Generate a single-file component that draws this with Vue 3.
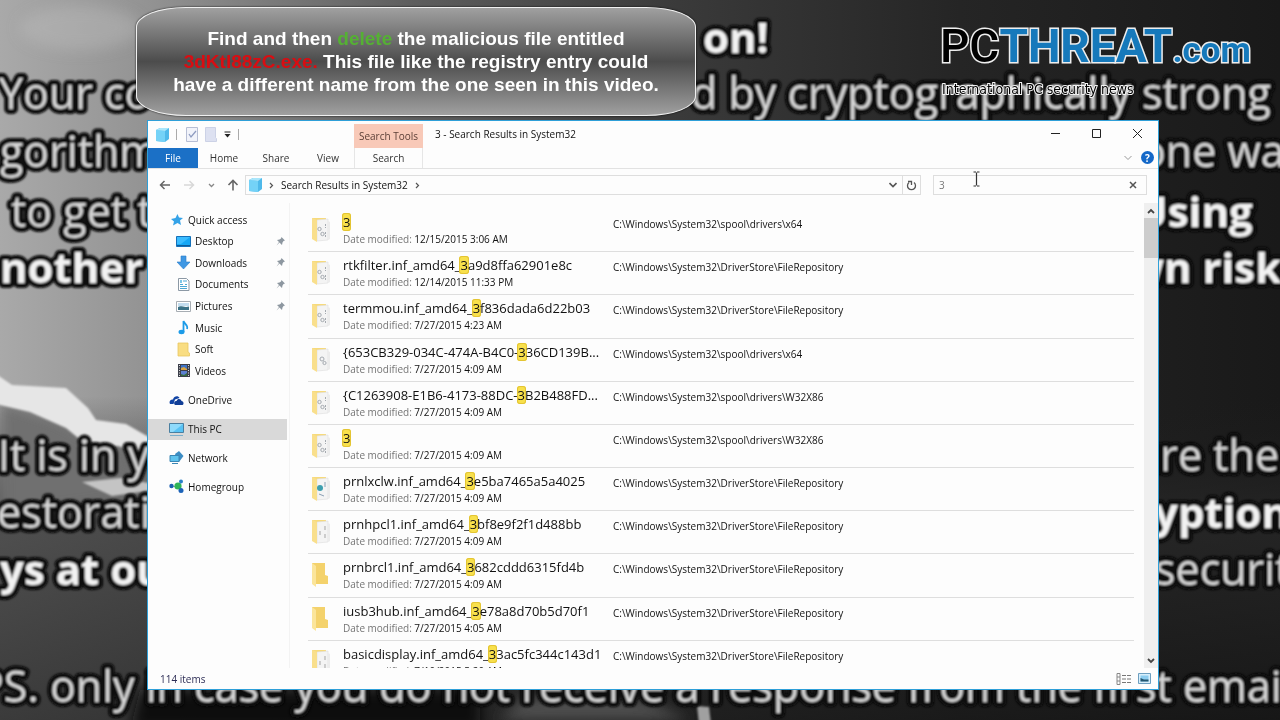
<script setup>
import { ref } from 'vue'

const query = ref('3')

const driver = 'C:\\Windows\\System32\\DriverStore\\FileRepository'
const spool64 = 'C:\\Windows\\System32\\spool\\drivers\\x64'
const spool86 = 'C:\\Windows\\System32\\spool\\drivers\\W32X86'

const results = [
  { pre: '', post: '', date: '12/15/2015 3:06 AM', path: spool64, kind: 'gears' },
  { pre: 'rtkfilter.inf_amd64_', post: 'a9d8ffa62901e8c', date: '12/14/2015 11:33 PM', path: driver, kind: 'gears' },
  { pre: 'termmou.inf_amd64_', post: 'f836dada6d22b03', date: '7/27/2015 4:23 AM', path: driver, kind: 'gears' },
  { pre: '{653CB329-034C-474A-B4C0-', post: '36CD139B...', date: '7/27/2015 4:09 AM', path: spool64, kind: 'gear' },
  { pre: '{C1263908-E1B6-4173-88DC-', post: 'B2B488FD...', date: '7/27/2015 4:09 AM', path: spool86, kind: 'gears' },
  { pre: '', post: '', date: '7/27/2015 4:09 AM', path: spool86, kind: 'gears' },
  { pre: 'prnlxclw.inf_amd64_', post: 'e5ba7465a5a4025', date: '7/27/2015 4:09 AM', path: driver, kind: 'globe' },
  { pre: 'prnhpcl1.inf_amd64_', post: 'bf8e9f2f1d488bb', date: '7/27/2015 4:09 AM', path: driver, kind: 'pages' },
  { pre: 'prnbrcl1.inf_amd64_', post: '682cddd6315fd4b', date: '7/27/2015 4:09 AM', path: driver, kind: 'plain' },
  { pre: 'iusb3hub.inf_amd64_', post: 'e78a8d70b5d70f1', date: '7/27/2015 4:05 AM', path: driver, kind: 'plain' },
  { pre: 'basicdisplay.inf_amd64_', post: '3ac5fc344c143d1', date: '7/10/2015 5:20 AM', path: driver, kind: 'pages' }
]

const quick = [
  { name: 'Quick access', icon: 'star', root: true },
  { name: 'Desktop', icon: 'desktop', pin: true },
  { name: 'Downloads', icon: 'down', pin: true },
  { name: 'Documents', icon: 'doc', pin: true },
  { name: 'Pictures', icon: 'pic', pin: true },
  { name: 'Music', icon: 'music' },
  { name: 'Soft', icon: 'folder' },
  { name: 'Videos', icon: 'video' }
]
const places = [
  { name: 'OneDrive', icon: 'cloud' },
  { name: 'This PC', icon: 'pc', selected: true },
  { name: 'Network', icon: 'network' },
  { name: 'Homegroup', icon: 'home' }
]

const note = [
  { x: 703, y: 53, b: true, t: 'on!' },
  { x: -1, y: 109, t: 'Your co' },
  { x: 691, y: 109, t: 'd by cryptographically strong' },
  { x: 0, y: 167, t: 'gorithm' },
  { x: 1140, y: 167, t: 'one wa' },
  { x: 11, y: 227, t: 'to get t' },
  { x: 1136, y: 227, b: true, t: 'Using' },
  { x: 0, y: 283, b: true, t: 'nother' },
  { x: 1128, y: 283, b: true, t: 'wn risk' },
  { x: -2, y: 471, t: 'It is in y' },
  { x: 1134, y: 471, t: 'ure the' },
  { x: -3, y: 528, t: 'estoratio' },
  { x: 1154, y: 528, b: true, t: 'yption' },
  { x: 0, y: 585, b: true, t: 'ys at ou' },
  { x: 1155, y: 585, t: 'securit' },
  { x: -22, y: 702, t: 'PS. only in case you do not receive a response from the first email' }
]
</script>

<template>
  <main class="desktop">
    <svg class="wallpaper" viewBox="0 0 1280 720" preserveAspectRatio="xMidYMid slice" aria-hidden="true">
      <defs>
        <linearGradient id="wall" x1="0" x2="1" y1="0" y2="0">
          <stop offset="0" stop-color="#a9a9a9" />
          <stop offset=".12" stop-color="#929292" />
          <stop offset=".32" stop-color="#5e5e5e" />
          <stop offset=".52" stop-color="#3b3b3b" />
          <stop offset=".75" stop-color="#252525" />
          <stop offset="1" stop-color="#191919" />
        </linearGradient>
        <linearGradient id="fall" x1="0" x2="0" y1="0" y2="1">
          <stop offset=".55" stop-color="#1c1c1c" stop-opacity="0" />
          <stop offset=".72" stop-color="#2a2a2a" stop-opacity=".7" />
          <stop offset="1" stop-color="#161616" stop-opacity=".75" />
        </linearGradient>
        <filter id="haze" x="-20%" y="-20%" width="140%" height="140%"><feGaussianBlur stdDeviation="7" /></filter>
        <filter id="soft" x="-5%" y="-20%" width="110%" height="140%"><feGaussianBlur stdDeviation="1" /></filter>
      </defs>
      <rect width="1280" height="720" fill="url(#wall)" />
      <rect width="1280" height="720" fill="url(#fall)" />
      <g filter="url(#haze)">
        <ellipse cx="80" cy="28" rx="60" ry="22" fill="#bdbdbd" opacity=".4" />
        <path d="M0 400L60 420L150 470V500L0 520Z" fill="#707070" />
        <path d="M140 690H330V730H130Z" fill="#101010" />
        <path d="M520 700l70-10 60 12 40 18H500Z" fill="#505050" />
        <path d="M300 690h180v40H300Z" fill="#080808" />
      </g>
      <g filter="url(#soft)">
        <path d="M-4 374L12 385L66 388L88 408L96 420L126 424L154 440V458L118 446L88 446L66 428L30 412L-4 404Z" fill="#e6e6e6" />
        <path d="M82 482L120 478L154 484V490L112 496Z" fill="#c4c4c4" />
        <path d="M697 706l12 1 2 17h-12Z" fill="#a0a0a0" />
      </g>
      <g class="note" filter="url(#soft)">
        <text v-for="l in note" :key="l.t" :x="l.x" :y="l.y" :class="{ strong: l.b }">{{ l.t }}</text>
      </g>
    </svg>

    <header class="brand">
      <h1><span class="pc">PC</span><span class="threat">THREAT</span><span class="com">.com</span></h1>
      <p>International PC security news</p>
    </header>

    <section class="window" aria-label="Search Results in System32">
      <div class="titlebar">
        <div class="quickbar">
          <svg class="cube" width="14" height="14" viewBox="0 0 14 14"><path d="M1 2L5 0H14V11L10 14L1 13Z" fill="#4fb9ea" /><path d="M1 2L10 3V14L1 13Z" fill="#74d2f7" /><path d="M1 2L5 0H14L10 3Z" fill="#a9e6fb" /></svg>
          <i class="bar"></i>
          <button aria-label="Properties"><svg width="12" height="15" viewBox="0 0 12 15"><path d="M.5.5h11v14H.5Z" fill="#f1f3fa" stroke="#b7bed4" /><path d="M3 7l2 3 5-6" fill="none" stroke="#8e9bc0" stroke-width="1.3" /></svg></button>
          <button aria-label="New folder"><svg width="12" height="15" viewBox="0 0 12 15"><path d="M.5.5h10v10l1 1v3H.5Z" fill="#dde1f1" stroke="#ccd2e6" /></svg></button>
          <button aria-label="Customize toolbar"><svg width="7" height="7" viewBox="0 0 7 7"><path d="M.5 1h6" stroke="#222" /><path d="M.5 3h6L3.500 6.500Z" fill="#222" /></svg></button>
          <i class="bar"></i>
        </div>
        <div class="context">Search Tools</div>
        <h2>3 - Search Results in System32</h2>
        <div class="controls">
          <button aria-label="Minimize"><svg width="11" height="11"><path d="M1 5.500h9" stroke="#222" /></svg></button>
          <button aria-label="Maximize"><svg width="11" height="11"><path d="M1.500 1.500h8v8h-8Z" fill="none" stroke="#222" /></svg></button>
          <button aria-label="Close"><svg width="11" height="11"><path d="M1 1l9 9M10 1l-9 9" stroke="#222" /></svg></button>
        </div>
      </div>

      <nav class="ribbon" aria-label="Ribbon">
        <button class="file">File</button>
        <button>Home</button>
        <button>Share</button>
        <button>View</button>
        <button class="current">Search</button>
        <span class="grow"></span>
        <button class="expand" aria-label="Expand ribbon"><svg width="8" height="6"><path d="M.5 1L4 4.500L7.500 1" fill="none" stroke="#999" /></svg></button>
        <button class="help" aria-label="Help">?</button>
      </nav>

      <div class="addressrow">
        <div class="arrows">
          <button aria-label="Back"><svg width="12" height="10"><path d="M11 5H1.500M5.500 1L1.500 5L5.500 9" fill="none" stroke="#666" stroke-width="1.500" /></svg></button>
          <button aria-label="Forward"><svg width="12" height="10"><path d="M1 5H10.500M6.500 1L10.500 5L6.500 9" fill="none" stroke="#d8d8d8" stroke-width="1.500" /></svg></button>
          <button aria-label="Recent"><svg width="7" height="5"><path d="M1 1L3.500 3.500L6 1" fill="none" stroke="#888" stroke-width="1.300" /></svg></button>
          <button aria-label="Up"><svg width="12" height="12"><path d="M6 11.500V1.500M1.500 6L6 1.500L10.500 6" fill="none" stroke="#666" stroke-width="1.600" /></svg></button>
        </div>
        <div class="address">
          <svg class="cube" width="14" height="14" viewBox="0 0 14 14"><path d="M1 2L5 0H14V11L10 14L1 13Z" fill="#4fb9ea" /><path d="M1 2L10 3V14L1 13Z" fill="#74d2f7" /><path d="M1 2L5 0H14L10 3Z" fill="#a9e6fb" /></svg>
          <svg width="5" height="7"><path d="M1 1L3.500 3.500L1 6" fill="none" stroke="#555" stroke-width="1.200" /></svg>
          <a href="#">Search Results in System32</a>
          <svg width="5" height="7"><path d="M1 1L3.500 3.500L1 6" fill="none" stroke="#555" stroke-width="1.200" /></svg>
          <span class="grow"></span>
          <button class="drop" aria-label="Previous locations"><svg width="8" height="6"><path d="M.5 1L4 4.500L7.500 1" fill="none" stroke="#555" stroke-width="1.600" /></svg></button>
          <button class="refresh" aria-label="Refresh"><svg width="11" height="12" viewBox="0 0 11 12"><path d="M3 3.600A4 4 0 1 0 8 3.600" fill="none" stroke="#555" stroke-width="1.300" /><path d="M2 2.500H5.500V6" fill="none" stroke="#555" stroke-width="1.300" /></svg></button>
        </div>
        <div class="search">
          <input v-model="query" type="text" aria-label="Search System32" />
          <button aria-label="Clear search"><svg width="8" height="8"><path d="M1 1l6 6M7 1l-6 6" stroke="#555" stroke-width="1.500" /></svg></button>
          <svg class="ibeam" width="7" height="16" viewBox="0 0 7 16"><path d="M.5 1H3M4 1H6.500M3.500 1.500V14.500M.5 15H3M4 15H6.500" fill="none" stroke="#333" stroke-width="1.200" /></svg>
        </div>
      </div>

      <div class="body">
        <nav class="tree" aria-label="Folders">
          <ul v-for="(group, g) in [quick, places]" :key="g" :class="g ? 'places' : 'quick'">
            <li v-for="n in group" :key="n.name">
              <a href="#" :class="{ child: !g && !n.root, selected: n.selected }">
                <svg width="15" height="15" viewBox="0 0 15 15">
                  <path v-if="n.icon === 'star'" d="M8.500 2L10 5.500L14 6L11 8.500L12 13L8.500 11L4 13.500L5 9.500L2 7L6.500 6Z" fill="#35a3e8" />
                  <g v-else-if="n.icon === 'desktop'"><path d="M.5 2.500h14v10H.5Z" fill="#15a7f5" stroke="#1570b8" /><path d="M1 3h13L5 10H1Z" fill="#3bbcff" /><path d="M1 11.500h13" stroke="#0c5d9c" /></g>
                  <path v-else-if="n.icon === 'down'" d="M5 1h5v6h4L7.500 14L1 7h4Z" fill="#3f97e3" stroke="#2a7cc9" stroke-width=".6" />
                  <g v-else-if="n.icon === 'doc'"><path d="M2.500 1.500h8l2.500 2.500v9.500H2.500Z" fill="#fff" stroke="#8c99a5" /><path d="M7 4h4M4 7.500h3M9 7.500h2M4 9.500h7M4 11.500h7" stroke="#4da9d4" /><path d="M4 3h2v3H4Z" fill="#7dc7e8" /></g>
                  <g v-else-if="n.icon === 'pic'"><path d="M.5 2.500h14v10H.5Z" fill="#fff" stroke="#a7adb3" /><path d="M2 4h11v3H2Z" fill="#c3ddef" /><path d="M2 8c3-2 6 1 11-.5V11H2Z" fill="#3a7287" /></g>
                  <g v-else-if="n.icon === 'music'"><ellipse cx="5.500" cy="12" rx="3" ry="2.200" fill="#1c9be8" /><path d="M7.500 12V1C8 4 12.500 5 11 9" fill="none" stroke="#1c9be8" stroke-width="1.800" /></g>
                  <g v-else-if="n.icon === 'folder'"><path d="M2 1h10v9l1.500 1v3H2Z" fill="#f9dd82" stroke="#e9c661" stroke-width=".8" /></g>
                  <g v-else-if="n.icon === 'video'"><path d="M2 1h12v13H2Z" fill="#3c3f4a" /><path d="M5 2h6v5H5Z" fill="#3e72c4" /><path d="M5 8h6v5H5Z" fill="#5b7fd0" /><path d="M5 5l3-1 3 2v1H5Z" fill="#d9a441" /><path d="M5 11l3 1 3-2v3H5Z" fill="#356b3f" /><path d="M3.500 2v11M12.500 2v11" stroke="#ddd" stroke-dasharray="1 1.500" /></g>
                  <g v-else-if="n.icon === 'cloud'"><path d="M1 11C-.5 8 2 6 4 6.500C5 2.500 9.500 2.500 10.500 5L6 6.500L4.500 11Z" fill="#1144a5" /><path d="M6 12C4 10 6 7.500 7.500 8C8.500 5 12 5.500 12.500 8C15 8.500 15 11.500 13.500 12Z" fill="#123f97" /></g>
                  <g v-else-if="n.icon === 'pc'"><path d="M.5 1.500h14v9H.5Z" fill="#58c2f4" stroke="#4a7fa0" /><path d="M1 2h13L4 10H1Z" fill="#8edafb" /><path d="M1 13.500h13" stroke="#7baecb" /></g>
                  <g v-else-if="n.icon === 'network'"><path d="M6 4L10 1L14.500 6L10 12L8 10Z" fill="#3c8dc4" /><path d="M1 5.500h9v6H1Z" fill="#5fc3ee" stroke="#3a86b4" /><path d="M3 13.500h6" stroke="#3a86b4" /></g>
                  <g v-else><path d="M3 7L8 8L12 3M8 8l4 4" stroke="#6aa" fill="none" /><circle cx="2.500" cy="7" r="2.200" fill="#1b5fb0" /><circle cx="9" cy="7" r="3.600" fill="#2fb457" /><circle cx="12" cy="2.500" r="2" fill="#2980c8" /><circle cx="12" cy="11.500" r="2.500" fill="#1b62b8" /></g>
                </svg>
                <span>{{ n.name }}</span>
                <svg v-if="n.pin" class="pin" width="9" height="9" viewBox="0 0 9 9"><path d="M5.500 0L9 3.500L7.500 4L6.500 5.500L6 8L3.500 5.500L.5 8.500L3 5L1 3L3.500 2.500L5 1.500Z" fill="#8d97a0" /></svg>
              </a>
            </li>
          </ul>
        </nav>

        <div class="pane">
          <ul class="results">
            <li v-for="(r, i) in results" :key="i">
              <svg class="thumb" width="20" height="26" viewBox="0 0 20 26">
                <template v-if="r.kind === 'plain'">
                  <path d="M1 1H14V13L17 14V22H5L1 20Z" fill="#f4d26c" />
                  <path d="M1 1L5 4V25L1 22Z" fill="#fbe59b" />
                </template>
                <template v-else>
                  <path d="M1 1H15V22H1Z" fill="#f7da7c" />
                  <path d="M6 3L17 2V23L6 24Z" fill="#f4f4f4" stroke="#dedede" stroke-width=".6" />
                  <path d="M17 4L19 5V22L17 23Z" fill="#ececec" />
                  <path d="M1 1L6 3V25L1 22Z" fill="#f9df8c" />
                  <g v-if="r.kind === 'gears'" fill="none" stroke="#a5aab0"><circle cx="8.500" cy="12" r="1.700" /><circle cx="11.500" cy="17" r="1.700" /><path d="M14.500 7v4M14.500 15v5" stroke-dasharray="2 1" /></g>
                  <g v-else-if="r.kind === 'gear'" fill="none" stroke="#a5aab0"><circle cx="11" cy="12" r="2" /><circle cx="13.500" cy="16" r="1.600" /></g>
                  <g v-else-if="r.kind === 'globe'"><circle cx="9" cy="12" r="3" fill="#3e9fae" /><path d="M8 18l5 2M14 6v5" stroke="#8ba0b5" /></g>
                  <path v-else d="M9 12v4M14 7v4M14 15v4" stroke="#a5a5a5" />
                </template>
              </svg>
              <div class="info">
                <a href="#">{{ r.pre }}<mark>3</mark>{{ r.post }}</a>
                <p><span>Date modified:</span> {{ r.date }}</p>
              </div>
              <p class="path">{{ r.path }}</p>
            </li>
          </ul>
        </div>

        <div class="scroll">
          <button aria-label="Scroll up"><svg width="8" height="6"><path d="M1 5L4 2L7 5" fill="none" stroke="#444" stroke-width="1.800" /></svg></button>
          <i class="handle"></i>
          <span class="grow"></span>
          <button aria-label="Scroll down"><svg width="8" height="6"><path d="M1 1L4 4L7 1" fill="none" stroke="#444" stroke-width="1.800" /></svg></button>
        </div>
      </div>

      <footer class="status">
        <span>114 items</span>
        <span class="grow"></span>
        <button aria-label="Details view"><svg width="16" height="12"><path d="M1 .5h3v11H1ZM1 4h3M1 8h3" fill="none" stroke="#888" /><path d="M6 2.500h4M11 2.500h4M6 6h4M11 6h4M6 9.500h4M11 9.500h4" stroke="#777" /></svg></button>
        <button aria-label="Large icons view"><svg width="13" height="11"><path d="M.5.5h12v10H.5Z" fill="#d8effb" stroke="#6d9fc0" /><path d="M2.500 2.500h8v6h-8Z" fill="#8ccdf0" /><path d="M2.500 5L6 6.500L10.500 6.500V8.500H2.500Z" fill="#24566f" /></svg></button>
      </footer>
    </section>

    <aside class="callout">
      <p>Find and then <em class="go">delete</em> the malicious file entitled<br /><em class="bad">3dKtl88zC.exe.</em> This file like the registry entry could<br />have a different name from the one seen in this video.</p>
    </aside>
  </main>
</template>

<style>
body { background: #222; }
</style>

<style scoped>
.desktop {
  position: relative;
  height: 100vh;
  min-height: 480px;
  overflow: hidden;
  font-family: "Open Sans", "Noto Sans", sans-serif;
  font-size: 10px;
  color: #111;
}
h1, h2, p, ul { margin: 0; padding: 0; }
ul { list-style: none; }
a { color: inherit; text-decoration: none; }
button {
  display: flex;
  align-items: center;
  justify-content: center;
  padding: 0;
  border: 0;
  background: none;
  font: inherit;
  color: inherit;
}
svg { display: block; flex: none; }
.grow { flex: 1; }

.wallpaper { position: absolute; inset: 0; width: 100%; height: 100%; }
.note text {
  font-family: "Open Sans", "Noto Sans", sans-serif;
  font-size: 43px;
  fill: #d6d6d6;
  stroke: #080808;
  stroke-width: 10px;
  stroke-linejoin: round;
  paint-order: stroke;
  white-space: pre;
}
.note .strong { font-size: 42px; font-weight: 700; fill: #f2f2f2; }

.brand { position: absolute; top: 16px; right: 26px; width: 314px; white-space: nowrap; }
.brand h1 {
  font-family: Roboto, "Liberation Sans", sans-serif;
  font-size: 46px;
  line-height: 60px;
  font-weight: 700;
}
.brand span { -webkit-text-stroke: 3px #eee; paint-order: stroke; }
.pc { color: #000; font-weight: 500; }
.threat, .com { color: #1679bb; }
.brand .com { font-size: 35px; }
.brand p {
  padding-left: 2px;
  font-family: "DejaVu Sans Condensed", "DejaVu Sans", sans-serif;
  font-size: 14px;
  line-height: 16px;
  color: #000;
  -webkit-text-stroke: 2px #f4f4f4;
  paint-order: stroke;
}

.callout {
  position: absolute;
  top: 7px;
  left: 136px;
  width: 560px;
  box-sizing: border-box;
  padding: 19px 0;
  border: 1px solid #f0f0f0;
  border-radius: 50px / 20px;
  background: linear-gradient(#a0a0a0, #4c4c4c 50%, #a0a0a0);
  box-shadow: 0 0 2px #000;
  color: #fff;
  font: 700 19px/23px "Liberation Sans", Arial, sans-serif;
  text-align: center;
  white-space: nowrap;
}
.callout em { font-style: normal; }
.go { color: #55b034; }
.bad { color: #d90d12; }

.window {
  position: absolute;
  top: 120px;
  right: 121px;
  bottom: 30px;
  left: 147px;
  display: flex;
  flex-direction: column;
  border: 1px solid #2f9fd8;
  background: #fdfdfd;
}
.titlebar { display: flex; height: 27px; }
.quickbar { display: flex; align-items: center; width: 206px; padding-left: 7px; box-sizing: border-box; gap: 7px; }
.bar { width: 1px; height: 11px; margin-right: 2px; background: #aaa; }
.context {
  width: 69px;
  height: 24px;
  margin-top: 3px;
  background: #f8c9b8;
  color: #5c4038;
  line-height: 24px;
  text-align: center;
  white-space: nowrap;
}
.titlebar h2 { flex: 1; padding-left: 12px; font-size: 10px; font-weight: 400; line-height: 26px; }
.controls { display: flex; }
.controls button { width: 41px; height: 25px; }

.ribbon { display: flex; height: 20px; border-bottom: 1px solid #e2e2e2; }
.ribbon button { width: 52px; color: #333; }
.ribbon .file { width: 50px; background: #1b70c6; color: #fff; }
.ribbon .current { width: 69px; border: 1px solid #e6e6e6; border-width: 0 1px; box-sizing: border-box; }
.ribbon .expand { width: 20px; }
.ribbon .help {
  width: 13px;
  height: 13px;
  margin: 3px 4px 0 3px;
  border-radius: 50%;
  background: #1468c8;
  color: #fff;
  font-weight: 700;
}

.addressrow { display: flex; align-items: center; height: 32px; padding: 0 11px 2px; }
.arrows { display: flex; justify-content: space-between; align-items: center; width: 80px; margin-right: 6px; }
.address, .search {
  position: relative;
  display: flex;
  align-items: center;
  height: 20px;
  box-sizing: border-box;
  border: 1px solid #dedede;
}
.address { flex: 1; gap: 7px; padding-left: 2px; }
.address .drop { width: 14px; }
.address .refresh { width: 18px; height: 18px; margin-left: -5px; border-left: 1px solid #dedede; }
.search { width: 214px; margin-left: 12px; }
.search input {
  flex: 1;
  min-width: 0;
  padding: 0 5px;
  border: 0;
  outline: 0;
  background: none;
  font: inherit;
  color: #777;
}
.search button { width: 26px; height: 18px; }
.ibeam { position: absolute; left: 39px; top: -5px; }

.body { display: flex; flex: 1; min-height: 0; }
.tree { width: 142px; box-sizing: border-box; padding-top: 6px; border-right: 1px solid #f3f3f3; }
.quick { display: grid; grid-template-rows: repeat(8, 1fr); height: 173px; }
.places { display: grid; grid-template-rows: repeat(4, 1fr); align-items: center; height: 115px; margin-top: 4px; }
.tree a { display: flex; align-items: center; gap: 4px; height: 21px; margin-right: 2px; padding: 0 2px 0 21px; }
.tree a.child { padding-left: 28px; }
.tree .selected { background: #d9d9d9; }
.pin { margin-left: auto; }

.pane { flex: 1; min-width: 0; padding: 6px 10px 0 18px; overflow: hidden; }
.results { display: grid; grid-template-rows: repeat(11, 1fr); height: 475px; }
.results li { display: flex; border-bottom: 1px solid #dedede; box-sizing: border-box; }
.thumb { margin: 8px 0 0 3px; }
.info { width: 282px; padding: 3px 0 0 12px; box-sizing: border-box; white-space: nowrap; }
.info a { display: block; font-size: 13px; line-height: 20px; }
.info p { line-height: 14px; }
.info p span { color: #757575; }
.path { padding-top: 8px; line-height: 15px; white-space: nowrap; }
mark {
  padding: 0 1px;
  margin: 0 -1px;
  border-radius: 3px;
  background: #f8e04c;
  box-shadow: inset 0 0 0 1px #e3c433;
  color: inherit;
}

.scroll { display: flex; flex-direction: column; width: 14px; background: #efefef; }
.scroll button { height: 15px; }
.handle { height: 40px; background: #cdcdcd; }

.status { display: flex; align-items: center; gap: 6px; height: 21px; padding: 0 7px 0 12px; color: #2d2d55; }
</style>
